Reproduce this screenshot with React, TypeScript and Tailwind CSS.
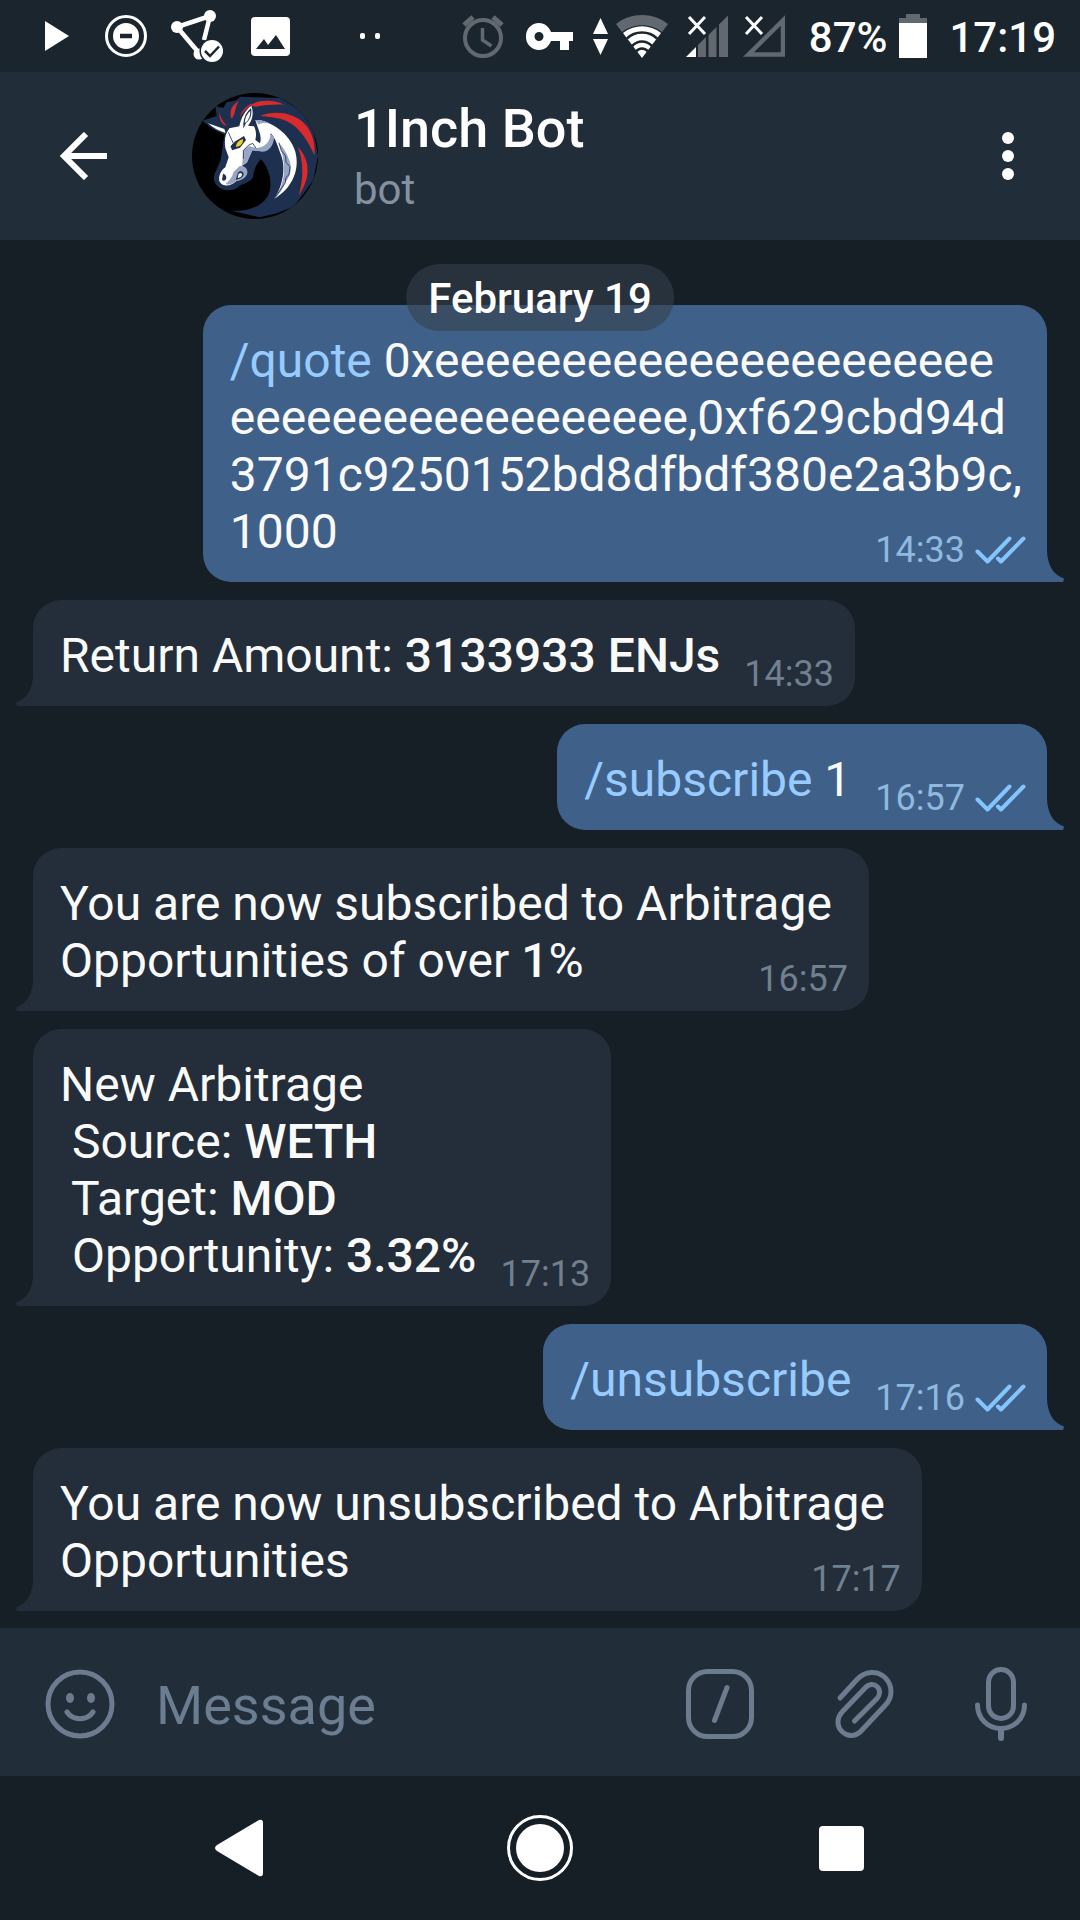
import type { ReactNode } from "react";

const iconStroke = {
  fill: "none",
  stroke: "currentColor",
  strokeWidth: 5,
  strokeLinecap: "round" as const,
  strokeLinejoin: "round" as const,
};

function StatusBar() {
  return (
    <div className="flex h-[72px] items-center justify-between bg-[#1b252e] pr-6 pl-[45px] text-white">
      <div className="flex items-center">
        <svg width="24" height="30" viewBox="0 0 24 30" fill="currentColor" aria-label="Playing">
          <path d="M0 0 24 15 0 30Z" />
        </svg>
        <svg className="ml-9" width="42" height="44" viewBox="0 0 42 44" aria-label="Do not disturb">
          <circle cx="21" cy="22" r="19.5" fill="none" stroke="currentColor" strokeWidth="3" />
          <circle cx="21" cy="22" r="13" fill="currentColor" />
          <path d="M15 22h12" stroke="#1b252e" strokeWidth="4.5" />
        </svg>
        <svg className="ml-6" width="52" height="52" viewBox="0 0 52 52" aria-label="Connected">
          <path d="M6 17 39 6 33 30M6 17 28 43" fill="none" stroke="currentColor" strokeWidth="4.5" />
          <circle cx="6" cy="17" r="6" fill="currentColor" />
          <circle cx="39" cy="6" r="6" fill="currentColor" />
          <circle cx="28" cy="44" r="5.5" fill="currentColor" />
          <circle cx="41" cy="41" r="12.5" fill="#1b252e" />
          <circle cx="41" cy="41" r="11" fill="currentColor" />
          <path d="m34 41 5 5 9-9.500" fill="none" stroke="#1b252e" strokeWidth="2.5" />
        </svg>
        <svg className="ml-7" width="39" height="39" viewBox="0 0 39 39" aria-label="Picture">
          <rect width="39" height="39" rx="4" fill="currentColor" />
          <path d="m5 32 8-10 4 6 8-10 9 14Z" fill="#1b252e" />
        </svg>
        <svg className="ml-[70px]" width="21" height="6" viewBox="0 0 21 6" fill="currentColor" aria-label="More notifications">
          <rect width="5" height="6" rx="2" />
          <rect x="15" width="5" height="6" rx="2" />
        </svg>
      </div>
      <div className="flex items-center">
        <svg width="42" height="44" viewBox="0 0 42 44" fill="none" stroke="#616870" strokeWidth="4" aria-label="Alarm">
          <circle cx="21" cy="24" r="18" />
          <path d="M2 11 11 3M40 11 31 3" strokeWidth="5" />
          <path d="M20.500 14v12l9 6" strokeWidth="3.500" />
        </svg>
        <svg className="ml-[22px]" width="47" height="27" viewBox="0 0 47 27" fill="currentColor" aria-label="VPN">
          <path
            fillRule="evenodd"
            d="M13 0c6 0 10 4 12 9h22v9h-4v9h-9v-9h-9c-2 5-6 9-12 9A13 13 0 0 1 0 13.500 13 13 0 0 1 13 0Zm0 9a4.500 4.500 0 1 0 0 9 4.500 4.500 0 0 0 0-9Z"
          />
        </svg>
        <svg className="ml-5" width="15" height="37" viewBox="0 0 15 37" fill="currentColor" aria-label="Data transfer">
          <path d="M7.500 0 15 16H0ZM0 21h15L7.500 37Z" />
        </svg>
        <svg className="ml-2" width="52" height="43" viewBox="0 0 52 43" aria-label="Wi-Fi">
          <path d="M0 9C15-3 37-3 52 9l-6 8C35 8 17 8 6 17Z" fill="#616870" />
          <path d="M26 43 7 18c11-9 27-9 38 0Z" fill="currentColor" />
          <path d="M11 23.500c8-8 22-8 30 0M16 31c6-6 14-6 20 0M20 36.500c3-4 9-4 12 0" fill="none" stroke="#1b252e" strokeWidth="2.5" />
        </svg>
        <svg className="ml-[18px]" width="42" height="42" viewBox="0 0 42 42" aria-label="SIM 1 signal">
          <path d="M0 42 10 32v10Z" fill="#fff" />
          <path d="m12 30 8-8v20h-8ZM22.500 20l8-8v30h-8ZM33 9.500l9-9V42h-9Z" fill="#616870" />
          <path d="m3 2 16 17M19 2 3 19" stroke="#fff" strokeWidth="3" />
        </svg>
        <svg className="ml-[15px]" width="42" height="42" viewBox="0 0 42 42" aria-label="SIM 2 signal">
          <path d="M5.500 39.500 40 5.500v34Z" fill="none" stroke="#616870" strokeWidth="4.500" />
          <path d="m3 2 16 17M19 2 3 19" stroke="#fff" strokeWidth="3" />
        </svg>
        <span className="ml-6 pt-[3px] text-[42px] leading-[48px] font-medium">87%</span>
        <svg className="ml-3" width="28" height="44" viewBox="0 0 28 44" aria-label="Battery">
          <path d="M7 0h14v4h7v6H0V4h7Z" fill="#616870" />
          <path d="M0 9h28v35H0Z" fill="#fff" />
        </svg>
        <time className="ml-[22px] pt-[3px] text-[42px] leading-[48px] font-medium">17:19</time>
      </div>
    </div>
  );
}

function Avatar() {
  return (
    <svg className="size-[126px] shrink-0 rounded-full" viewBox="36 39 378 378" aria-label="1Inch Bot">
      <rect x="36" y="39" width="378" height="378" fill="#000" />
      <path
        fill="#1d3050"
        d="M66 122 110 108 106 78 130 84 140 66 165 62 182 50 225 52 300 54 360 90 400 150 414 228 400 300 372 340 340 380 290 400 240 412 155 392C205 396 245 378 262 350 280 320 272 270 243 238 228 252 222 270 219 292 210 308 190 310 178 318 165 334 130 336 112 318 98 305 100 285 108 272L122 240 130 185 134 164 100 148Z"
      />
      <path fill="#fff" d="M84 130 133 147 137 159C118 154 100 144 84 130Z" />
      <path
        fill="#fff"
        d="M148 145 178 139C182 115 196 90 214 77 222 98 218 120 204 137L222 139C228 150 230 165 226 180L240 190C245 174 240 160 234 144L226 120C270 120 330 160 346 215 362 275 330 330 282 357 310 315 318 260 302 222 290 190 285 172 272 160 278 185 262 206 240 212L217 211 200 248 186 257C166 270 176 290 168 304 155 318 130 322 120 307 112 295 122 270 136 262L146 232 136 204C132 180 136 160 148 145Z"
      />
      <path
        fill="#98a5c6"
        d="M190 211 207 198 228 204C252 204 274 185 270 160L282 170C282 200 262 220 238 214L217 211 201 248 186 256 188 238ZM178 259C190 254 204 264 202 279 200 292 185 302 168 304 155 314 143 316 137 311 150 302 158 288 160 277ZM282 357C318 310 320 255 297 190 314 205 320 222 330 246 336 270 330 292 316 306 308 330 296 346 282 357ZM226 120C245 119 260 124 273 133 258 128 244 128 236 134Z"
      />
      <path fill="#1d3050" d="M190 130C192 110 200 95 213 84 217 102 211 120 198 129L190 146Z" />
      <path fill="#fff" d="M194 129C195 112 201 101 211 92 212 107 206 119 198 127Z" />
      <path fill="#1d3050" d="M152 199 166 184 192 168 198 180 180 203 156 211Z" />
      <path fill="#f2cf20" d="M168 201C168 188 178 180 189 177 190 188 184 199 168 201Z" />
      <path fill="#1d3050" d="M129 281C137 283 142 290 137 299 130 306 124 301 127 294ZM174 278C180 270 191 273 191 283 189 293 179 298 167 299Z" />
      <path fill="#fff" d="M176 281C182 276 187 280 186 285 183 292 178 294 173 294Z" />
      <path
        fill="none"
        stroke="#1d3050"
        strokeWidth="2.500"
        d="M190 236V212L205 196 218 190 228 205M297 188 304 212 317 228 318 247 330 260 327 284 318 292 316 308 282 357M135 163 147 143M145 157 160 190 152 202"
      />
      <path
        fill="#d92a2c"
        d="M118 94C120 112 128 124 141 138 127 136 116 120 118 94ZM153 113C148 94 156 74 176 64 164 81 168 98 157 115ZM180 110C184 92 200 79 216 70L211 78C199 86 190 96 180 110ZM210 76C240 56 285 60 313 74 280 73 250 75 227 80ZM241 108C285 88 350 98 382 140 402 170 406 200 403 226 388 190 360 140 318 122 290 112 262 110 241 108ZM353 200C388 235 396 290 356 347 370 296 372 248 353 200Z"
      />
    </svg>
  );
}

function Header() {
  return (
    <header className="flex h-[168px] items-center bg-[#222d3a] text-white">
      <button type="button" aria-label="Back" className="ml-[60px] flex">
        <svg width="48" height="48" viewBox="0 0 48 48" fill="none" stroke="currentColor" strokeWidth="6">
          <path d="M47 24H5M26 2 4 24l22 22" />
        </svg>
      </button>
      <div className="ml-[84px] flex flex-1 items-center">
        <Avatar />
        <div className="ml-9 pt-[3px]">
          <h1 className="text-[54px] leading-[64px] font-medium">1Inch Bot</h1>
          <p className="text-[42px] leading-[58px] text-[#8391a0]">bot</p>
        </div>
      </div>
      <button type="button" aria-label="Menu" className="mr-16 flex">
        <svg width="16" height="48" viewBox="0 0 16 48" fill="currentColor">
          <circle cx="8" cy="6" r="6" />
          <circle cx="8" cy="24" r="6" />
          <circle cx="8" cy="42" r="6" />
        </svg>
      </button>
    </header>
  );
}

function Checks() {
  return (
    <svg width="51" height="28" viewBox="0 0 51 28" fill="none" stroke="#83c5ff" strokeWidth="4" strokeLinecap="round" strokeLinejoin="round" aria-label="Read">
      <path d="m2.500 15.500 10 10L34.500 2.500M23 22.500l3 3L48.500 2.500" />
    </svg>
  );
}

type MessageProps = {
  out?: boolean;
  time: string;
  stacked?: boolean;
  textEnd?: "wide" | "narrow";
  lines: ReactNode[];
};

function Message({ out = false, time, stacked = false, textEnd = "wide", lines }: MessageProps) {
  const side = out
    ? "self-end rounded-bl-[28px] bg-[#3f6189] text-[#3f6189] mr-[33px]"
    : "self-start rounded-br-[28px] bg-[#232e3a] text-[#232e3a] ml-[33px]";
  const inner = stacked ? "grid" : "flex gap-6";
  const textGap = !stacked ? "" : textEnd === "wide" ? "mr-4" : "mr-1";
  return (
    <article className={`relative rounded-t-[28px] pt-[27px] pr-[21px] pb-[22px] pl-[27px] ${side}`}>
      <svg
        className={out ? "absolute bottom-0 left-full" : "absolute right-full bottom-0 -scale-x-100"}
        width="17"
        height="32"
        viewBox="0 0 17 32"
        fill="currentColor"
        aria-hidden="true"
      >
        <path d="M0 0C0 14 6 25 17 28.500Q17 30 16 32H0Z" />
      </svg>
      <div className={inner}>
        <div className={`col-start-1 row-start-1 text-[48px] leading-[57px] whitespace-pre text-[#fafafa] ${textGap}`}>
          {lines.map((line, i) => (
            <p key={i}>{line}</p>
          ))}
        </div>
        <div className="col-start-1 row-start-1 -mb-3 flex items-center gap-2.5 self-end justify-self-end">
          <time className={`text-[36px] leading-[44px] ${out ? "text-[#8fbadf]" : "text-[#70808f]"}`}>{time}</time>
          {out && <Checks />}
        </div>
      </div>
    </article>
  );
}

function Command({ children }: { children: ReactNode }) {
  return (
    <a href="#command" className="text-[#98cbff]">
      {children}
    </a>
  );
}

function Bold({ children }: { children: ReactNode }) {
  return <b className="font-medium">{children}</b>;
}

function Chat() {
  return (
    <main className="relative flex flex-col gap-[18px] bg-[#161e26] pt-[65px] pb-[17px]">
      <div className="absolute top-6 left-1/2 z-10 -translate-x-1/2 rounded-full bg-[#363f4b]/60 px-[22px] pt-[9px] pb-[7px] text-[42px] leading-[51px] font-medium whitespace-nowrap text-white">
        February 19
      </div>
      <Message
        out
        stacked
        textEnd="narrow"
        time="14:33"
        lines={[
          <>
            <Command>/quote</Command>
            {" 0xeeeeeeeeeeeeeeeeeeeeee"}
          </>,
          "eeeeeeeeeeeeeeeeee,0xf629cbd94d",
          "3791c9250152bd8dfbdf380e2a3b9c,",
          "1000",
        ]}
      />
      <Message
        time="14:33"
        lines={[
          <>
            Return Amount: <Bold>3133933 ENJs</Bold>
          </>,
        ]}
      />
      <Message
        out
        time="16:57"
        lines={[
          <>
            <Command>/subscribe</Command> 1
          </>,
        ]}
      />
      <Message
        stacked
        time="16:57"
        lines={[
          "You are now subscribed to Arbitrage",
          <>
            Opportunities of over <Bold>1</Bold>%
          </>,
        ]}
      />
      <Message
        time="17:13"
        lines={[
          "New Arbitrage",
          <>
            {" Source: "}
            <Bold>WETH</Bold>
          </>,
          <>
            {" Target: "}
            <Bold>MOD</Bold>
          </>,
          <>
            {" Opportunity: "}
            <Bold>3.32%</Bold>
          </>,
        ]}
      />
      <Message out time="17:16" lines={[<Command>/unsubscribe</Command>]} />
      <Message stacked time="17:17" lines={["You are now unsubscribed to Arbitrage", "Opportunities"]} />
    </main>
  );
}

function Composer() {
  return (
    <form className="flex h-[148px] items-center bg-[#222d3a] pt-[3px] pr-[51px] pl-[45px] text-[#6c7b8e]">
      <button type="button" aria-label="Emoji" className="flex">
        <svg width="70" height="70" viewBox="0 0 70 70" {...iconStroke}>
          <circle cx="35" cy="35" r="32" />
          <path d="M22 43c6 9 20 9 26 0" />
          <ellipse cx="25" cy="29" rx="4" ry="5" fill="currentColor" stroke="none" />
          <ellipse cx="46" cy="29" rx="4" ry="5" fill="currentColor" stroke="none" />
        </svg>
      </button>
      <input
        type="text"
        aria-label="Message"
        placeholder="Message"
        className="ml-[41px] h-[68px] min-w-0 flex-1 bg-transparent pt-[3px] text-[54px] leading-[64px] outline-none placeholder:text-[#6b7d90]"
      />
      <button type="button" aria-label="Bot commands" className="flex">
        <svg width="68" height="70" viewBox="0 0 68 70" {...iconStroke}>
          <rect x="2.500" y="2.500" width="63" height="65" rx="19" />
          <path d="M41 18.500 28.500 51.500" />
        </svg>
      </button>
      <button type="button" aria-label="Attach" className="ml-[81px] flex">
        <svg width="60" height="70" viewBox="0 0 60 70" {...iconStroke}>
          <path d="M5 29 22 10.500C30 2 42 1 50 8.500c8 8 8 20 0 28L27 61c-6 7-14 7-19.500 2-6-5.500-6-14 0-20.500L30 19c4-4.500 9-4.500 12-1.500 3.500 3.500 3.500 8 0 12L19.500 52" />
        </svg>
      </button>
      <button type="button" aria-label="Record voice message" className="ml-20 flex">
        <svg width="54" height="74" viewBox="0 0 54 74" {...iconStroke}>
          <rect x="13.500" y="2.500" width="25" height="49" rx="12.500" />
          <path d="M2.500 38c0 14 11 23.500 23.500 23.500S49.500 52 49.500 38" />
          <path d="M26 62v9" strokeWidth="6" />
        </svg>
      </button>
    </form>
  );
}

function NavBar() {
  return (
    <nav className="flex h-36 items-center justify-center gap-[236px] bg-[#161e26] text-white">
      <button type="button" aria-label="Back" className="flex w-[64px] justify-center">
        <svg width="48" height="58" viewBox="0 0 48 58" fill="currentColor">
          <path d="M44 1q4-1 4 3v50q0 4-4 3L2 32q-4-3 0-6Z" />
        </svg>
      </button>
      <button type="button" aria-label="Home" className="flex">
        <svg width="66" height="66" viewBox="0 0 66 66" fill="currentColor">
          <circle cx="33" cy="33" r="31.500" fill="none" stroke="currentColor" strokeWidth="3" />
          <circle cx="33" cy="33" r="24" />
        </svg>
      </button>
      <button type="button" aria-label="Recent apps" className="flex w-[64px] justify-center">
        <span className="size-[45px] rounded bg-white" />
      </button>
    </nav>
  );
}

export default function App() {
  return (
    <div className="flex min-h-screen flex-col bg-[#161e26] font-[Roboto,sans-serif]">
      <StatusBar />
      <Header />
      <Chat />
      <Composer />
      <NavBar />
    </div>
  );
}
